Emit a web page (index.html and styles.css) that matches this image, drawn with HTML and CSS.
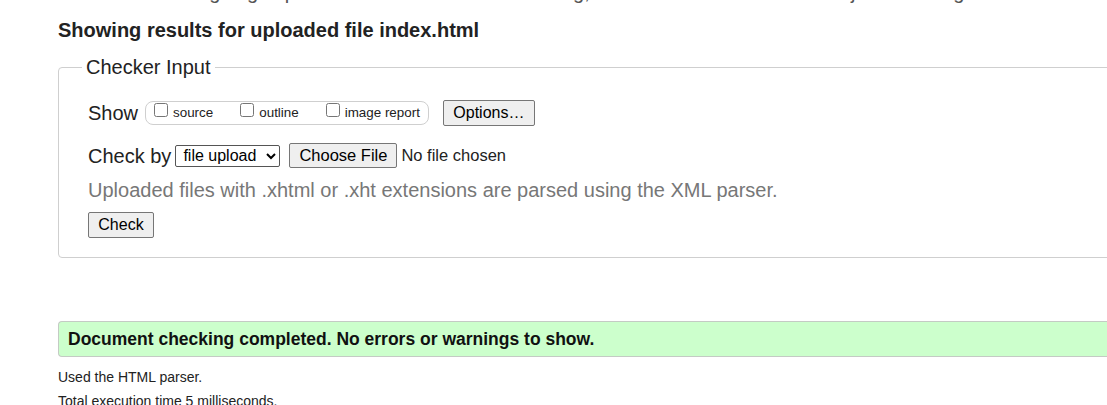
FILE: index.html
```html
<!DOCTYPE html>
<html lang="en">
<head>
<meta charset="utf-8">
<title>Nu Html Checker</title>
<link rel="stylesheet" href="styles.css">
</head>
<body>
<div class="page">
  <p class="intro">This tool is an ongoing experiment in better HTML checking, and its behavior remains subject to change</p>
  <h2 class="title">Showing results for uploaded file index.html</h2>
  <form class="checker">
    <fieldset class="fs">
      <legend class="legend">Checker Input</legend>
      <div class="rows">
        <div class="row row-show">
          <span class="label">Show</span>
          <span class="opts">
            <label class="opt"><input type="checkbox" class="cb"><span>source</span></label>
            <label class="opt"><input type="checkbox" class="cb"><span>outline</span></label>
            <label class="opt"><input type="checkbox" class="cb"><span>image report</span></label>
          </span>
          <button type="button" class="btn btn-options">Options…</button>
        </div>
        <div class="row row-check">
          <span class="label">Check by</span>
          <select class="sel"><option>file upload</option></select>
          <input type="file" class="file">
        </div>
        <p class="hint">Uploaded files with .xhtml or .xht extensions are parsed using the XML parser.</p>
        <button type="button" class="btn btn-check">Check</button>
      </div>
    </fieldset>
  </form>
  <p class="success">Document checking completed. No errors or warnings to show.</p>
  <p class="info">Used the HTML parser.</p>
  <p class="info">Total execution time 5 milliseconds.</p>
</div>
</body>
</html>
```
FILE: styles.css
```css
html, body {
  margin: 0;
  padding: 0;
  background: #fff;
  overflow: hidden;
}
body {
  font-family: "Liberation Sans", Arial, sans-serif;
  color: #222;
}
.page {
  padding-left: 58px;
  width: 1200px;
}
.intro {
  margin: -19px 0 0;
  font-size: 20px;
  line-height: 22px;
  color: #555;
  white-space: nowrap;
}
.title {
  margin: 15px 0 13px;
  font-size: 20px;
  line-height: 24px;
  font-weight: bold;
  color: #222;
}
.checker {
  margin: 0;
}
.fs {
  margin: 0;
  padding: 0 0 19px 23px;
  border: 1px solid #cfcfcf;
  border-radius: 4px;
  min-width: 0;
}
.legend {
  padding: 0 4px;
  font-size: 20px;
  line-height: 24px;
  color: #222;
}
.rows {
  padding: 21px 0 0 6px;
}
.row {
  display: flex;
  align-items: center;
}
.label {
  font-size: 20px;
  line-height: 24px;
}
.row-show {
  height: 26px;
}
.opts {
  display: flex;
  align-items: center;
  gap: 27px;
  height: 22px;
  margin-left: 7px;
  padding: 0 8px;
  border: 1px solid #cfcfcf;
  border-radius: 8px;
}
.opt {
  display: flex;
  align-items: center;
  font-size: 13.4px;
  line-height: 16px;
  color: #222;
}
.cb {
  width: 14px;
  height: 14px;
  margin: 0 5px 0 0;
  position: relative;
  top: -3px;
}
.btn {
  font-family: "Liberation Sans", Arial, sans-serif;
  font-size: 16px;
  line-height: 18px;
  color: #000;
  background: #efefef;
  border: 1px solid #767676;
  border-radius: 2px;
  padding: 0 8px;
  height: 26px;
}
.btn-options {
  margin-left: 14px;
  width: 92px;
}
.row-check {
  margin-top: 17px;
  height: 25px;
}
.sel {
  margin-left: 4px;
  height: 22px;
  width: 105px;
  font-family: "Liberation Sans", Arial, sans-serif;
  font-size: 16px;
  color: #000;
  border: 1px solid #555;
  border-radius: 2px;
  background: #fff;
  padding: 0 0 0 3px;
}
.file {
  margin-left: 9px;
  font-family: "Liberation Sans", Arial, sans-serif;
  font-size: 16.5px;
  color: #222;
}
.file::file-selector-button {
  font-family: "Liberation Sans", Arial, sans-serif;
  font-size: 16.5px;
  height: 25px;
  padding: 0 9px;
  margin-right: 4px;
  background: #efefef;
  border: 1px solid #767676;
  border-radius: 2px;
  color: #000;
}
.hint {
  margin: 10px 0 0;
  font-size: 20px;
  line-height: 24px;
  color: #777;
  white-space: nowrap;
}
.btn-check {
  margin-top: 10px;
  width: 66px;
}
.success {
  margin: 63px 0 0;
  height: 34px;
  line-height: 34px;
  padding-left: 9px;
  font-size: 17.5px;
  font-weight: bold;
  color: #111;
  background: #ccffcc;
  border: 1px solid #c4cbc4;
  border-right: 0;
  border-radius: 4px 0 0 4px;
}
.info {
  margin: 11px 0 0;
  font-size: 14px;
  line-height: 18px;
  color: #222;
}
.info + .info {
  margin-top: 6px;
}
```
